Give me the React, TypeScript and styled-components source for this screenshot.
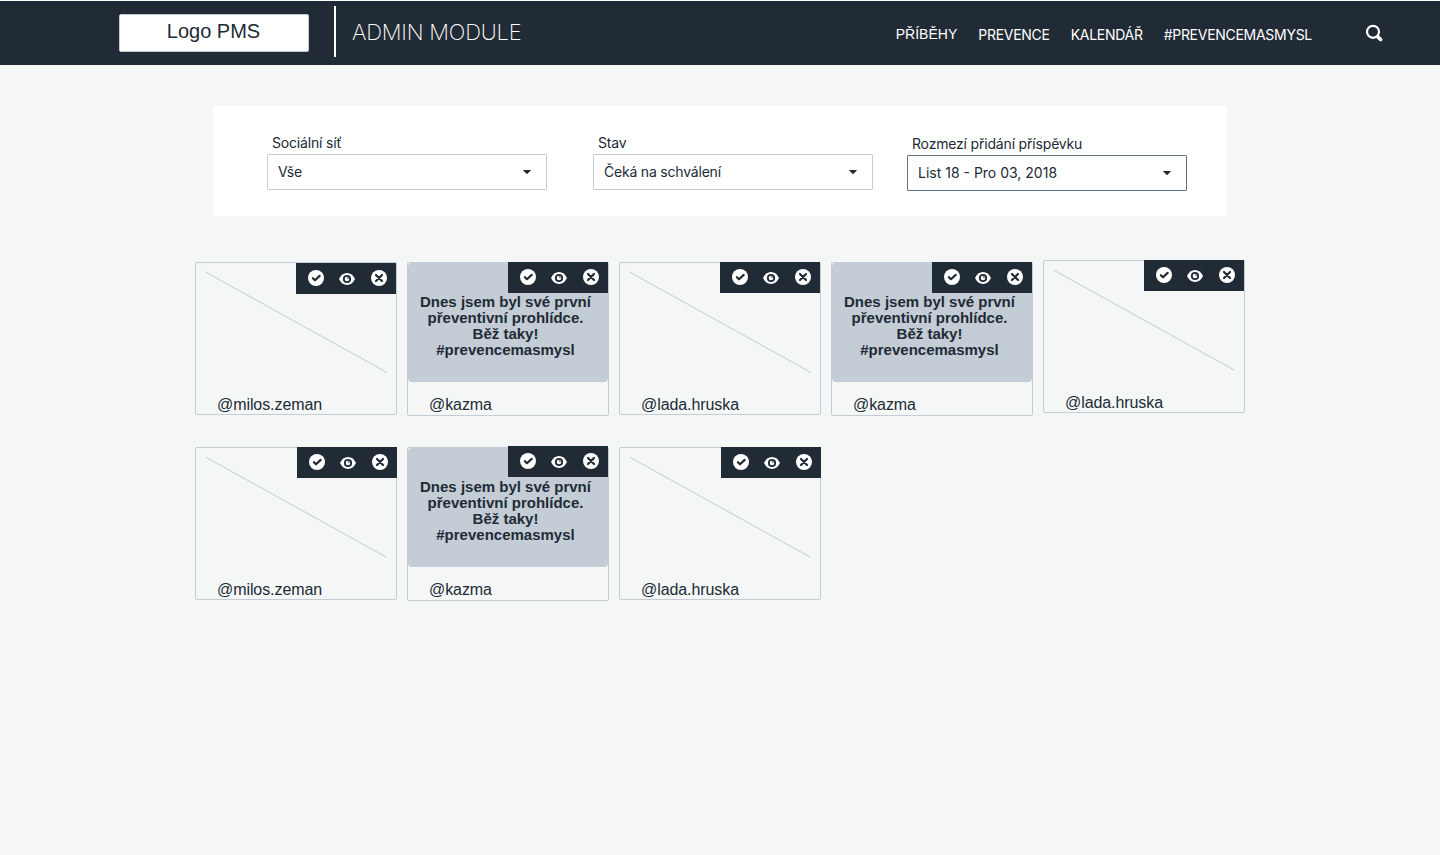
import React from 'react';
import styled, { createGlobalStyle, css } from 'styled-components';

const ink = '#212b35';
const line = '#c4ccd6';
const sans = `"Liberation Sans", Arial, sans-serif`;
const inter = `Inter, "Liberation Sans", sans-serif`;

const GlobalStyle = createGlobalStyle`
  *, *::before, *::after { box-sizing: border-box; }
  body { margin: 0; background: #f4f7f6; color: ${ink}; font-family: ${sans}; }
`;

const Page = styled.div`
  min-height: 855px;
  border-top: 1px solid #fff;
`;

const Header = styled.header`
  display: flex;
  align-items: flex-start;
  height: 64px;
  padding: 0 57px 0 119px;
  background: ${ink};
  color: #fff;
`;

const Logo = styled.div`
  width: 190px;
  height: 38px;
  margin-top: 13px;
  padding-right: 1px;
  border: 1px solid ${line};
  border-radius: 2px;
  background: #fff;
  color: ${ink};
  font-size: 20px;
  line-height: 32px;
  text-align: center;
`;

const Divider = styled.div`
  width: 2px;
  height: 51px;
  margin: 5px 0 0 25px;
  background: #fff;
`;

const Title = styled.h1`
  margin: 17px 0 0 16px;
  font: 250 22px/28px ${inter};
  letter-spacing: -0.22px;
  white-space: nowrap;
`;

const Nav = styled.nav`
  display: flex;
  gap: 21px;
  margin: 24px 53px 0 auto;
`;

const NavLink = styled.a<{ $active?: boolean }>`
  font: 400 14px/20px ${inter};
  letter-spacing: -0.28px;
  white-space: nowrap;
  ${(p) => p.$active && css`
    font-family: ${sans};
    letter-spacing: 0;
    line-height: 19px;
  `}
`;

const SearchIcon = styled.svg`
  width: 18px;
  height: 18px;
  margin-top: 23px;
  flex: none;
`;

const Filters = styled.section`
  display: flex;
  width: 1014px;
  height: 110px;
  margin: 41px auto 0;
  padding: 27px 0 0 54px;
  background: #fff;
`;

const Field = styled.div<{ $gap?: number; $drop?: number }>`
  width: 280px;
  margin-right: ${(p) => p.$gap ?? 0}px;
  padding-top: ${(p) => p.$drop ?? 0}px;
  font: 400 14px/20px ${inter};
  letter-spacing: -0.18px;
`;

const FieldLabel = styled.div`
  height: 21px;
  padding-left: 5px;
`;

const Select = styled.div<{ $focused?: boolean }>`
  display: flex;
  align-items: center;
  justify-content: space-between;
  height: 36px;
  padding: 0 11px 0 10px;
  border: 1px solid ${(p) => (p.$focused ? '#637381' : line)};
  border-radius: 1px;
  letter-spacing: ${(p) => (p.$focused ? '0' : '-0.2px')};
`;

const Cards = styled.main`
  display: grid;
  grid-template-columns: repeat(5, 202px);
  grid-auto-rows: 185px;
  column-gap: 10px;
  width: 1050px;
  margin: 46px auto 0;
`;

const Card = styled.article<{ $tall?: boolean; $raised?: boolean }>`
  position: relative;
  height: ${(p) => (p.$tall ? 154 : 153)}px;
  margin-top: ${(p) => (p.$raised ? -2 : 0)}px;
  border: 1px solid ${line};
  border-radius: 2px;
`;

const Picture = styled.svg`
  display: block;
  width: 200px;
  height: 119px;
`;

const Quote = styled.p`
  height: 119px;
  margin: 0;
  padding: 31px 5px 0 0;
  border-radius: 4px;
  background: ${line};
  font-size: 15px;
  font-weight: 700;
  line-height: 16px;
  text-align: center;
  white-space: pre-line;
`;

const Author = styled.div`
  padding: 14px 0 0 21px;
  font-size: 16px;
  line-height: 18px;
  letter-spacing: -0.08px;
`;

const Actions = styled.div<{ $x: number; $y: number }>`
  position: absolute;
  top: ${(p) => p.$y}px;
  right: ${(p) => p.$x}px;
  display: grid;
  grid-template-columns: 31px 32px 16px;
  align-items: start;
  width: 100px;
  height: 31px;
  padding: 7px 9px 0 12px;
  background: ${ink};
`;

const ActionIcon = styled.svg`
  width: 16px;
  height: 16px;
`;

const Caret = () => (
  <svg width="16" height="16" viewBox="0 0 16 16" fill={ink}>
    <path d="M4.500 6h7c.5 0 .6.300.3.600L8.500 9.800c-.3.300-.7.300-1 0L4.200 6.600c-.3-.3-.2-.6.3-.6z" />
  </svg>
);

const Search = () => (
  <SearchIcon viewBox="0 0 18 18" fill="none" stroke="#fff">
    <circle cx="8" cy="7.800" r="6" strokeWidth="2.200" />
    <path d="M12.600 12.600l3 2.900" strokeWidth="3.600" strokeLinecap="round" />
  </SearchIcon>
);

const CardActions = ({ x, y }: { x: number; y: number }) => (
  <Actions $x={x} $y={y}>
    <ActionIcon viewBox="0 0 16 16">
      <circle cx="8" cy="8" r="8" fill="#fff" />
      <path d="M4.900 8.200l2.100 2.100 4.700-4.400" fill="none" stroke={ink} strokeWidth="2.200" strokeLinecap="round" strokeLinejoin="round" />
    </ActionIcon>
    <ActionIcon viewBox="0 0 16 16">
      <path d="M0 9c1.700-3.700 4.600-6 8-6s6.300 2.300 8 6c-1.700 3.700-4.600 6-8 6s-6.300-2.300-8-6z" fill="#fff" />
      <circle cx="8" cy="9" r="3.200" fill="none" stroke={ink} strokeWidth="1.800" />
      <circle cx="8.900" cy="8.100" r=".8" fill={ink} />
    </ActionIcon>
    <ActionIcon viewBox="0 0 16 16">
      <circle cx="8" cy="8" r="8" fill="#fff" />
      <path d="M5 5l6 6M11 5l-6 6" fill="none" stroke={ink} strokeWidth="2.200" strokeLinecap="round" />
    </ActionIcon>
  </Actions>
);

type Post = { author: string; quote?: boolean; raised?: boolean; x: number; y: number };

const posts: Post[] = [
  { author: '@milos.zeman', x: 0, y: 0 },
  { author: '@kazma', quote: true, x: 0, y: -1 },
  { author: '@lada.hruska', x: 0, y: -1 },
  { author: '@kazma', quote: true, x: 0, y: -1 },
  { author: '@lada.hruska', raised: true, x: 0, y: -1 },
  { author: '@milos.zeman', x: -1, y: -1 },
  { author: '@kazma', quote: true, x: 0, y: -2 },
  { author: '@lada.hruska', x: -1, y: -1 },
];

const message = 'Dnes jsem byl své první\npřeventivní prohlídce.\nBěž taky!\n#prevencemasmysl';

export default function App() {
  return (
    <Page>
      <GlobalStyle />
      <Header>
        <Logo>Logo PMS</Logo>
        <Divider />
        <Title>ADMIN MODULE</Title>
        <Nav>
          <NavLink $active>PŘÍBĚHY</NavLink>
          <NavLink>PREVENCE</NavLink>
          <NavLink>KALENDÁŘ</NavLink>
          <NavLink>#PREVENCEMASMYSL</NavLink>
        </Nav>
        <Search />
      </Header>
      <Filters>
        <Field $gap={46}>
          <FieldLabel>Sociální síť</FieldLabel>
          <Select>Vše<Caret /></Select>
        </Field>
        <Field $gap={34}>
          <FieldLabel>Stav</FieldLabel>
          <Select>Čeká na schválení<Caret /></Select>
        </Field>
        <Field $drop={1}>
          <FieldLabel>Rozmezí přidání příspěvku</FieldLabel>
          <Select $focused>List 18 - Pro 03, 2018<Caret /></Select>
        </Field>
      </Filters>
      <Cards>
        {posts.map((post, i) => (
          <Card key={i} $tall={post.quote} $raised={post.raised}>
            {post.quote ? (
              <Quote>{message}</Quote>
            ) : (
              <Picture viewBox="0 0 200 119">
                <path d="M9.500 9L191 109.500" stroke={line} />
              </Picture>
            )}
            <Author>{post.author}</Author>
            <CardActions x={post.x} y={post.y} />
          </Card>
        ))}
      </Cards>
    </Page>
  );
}
